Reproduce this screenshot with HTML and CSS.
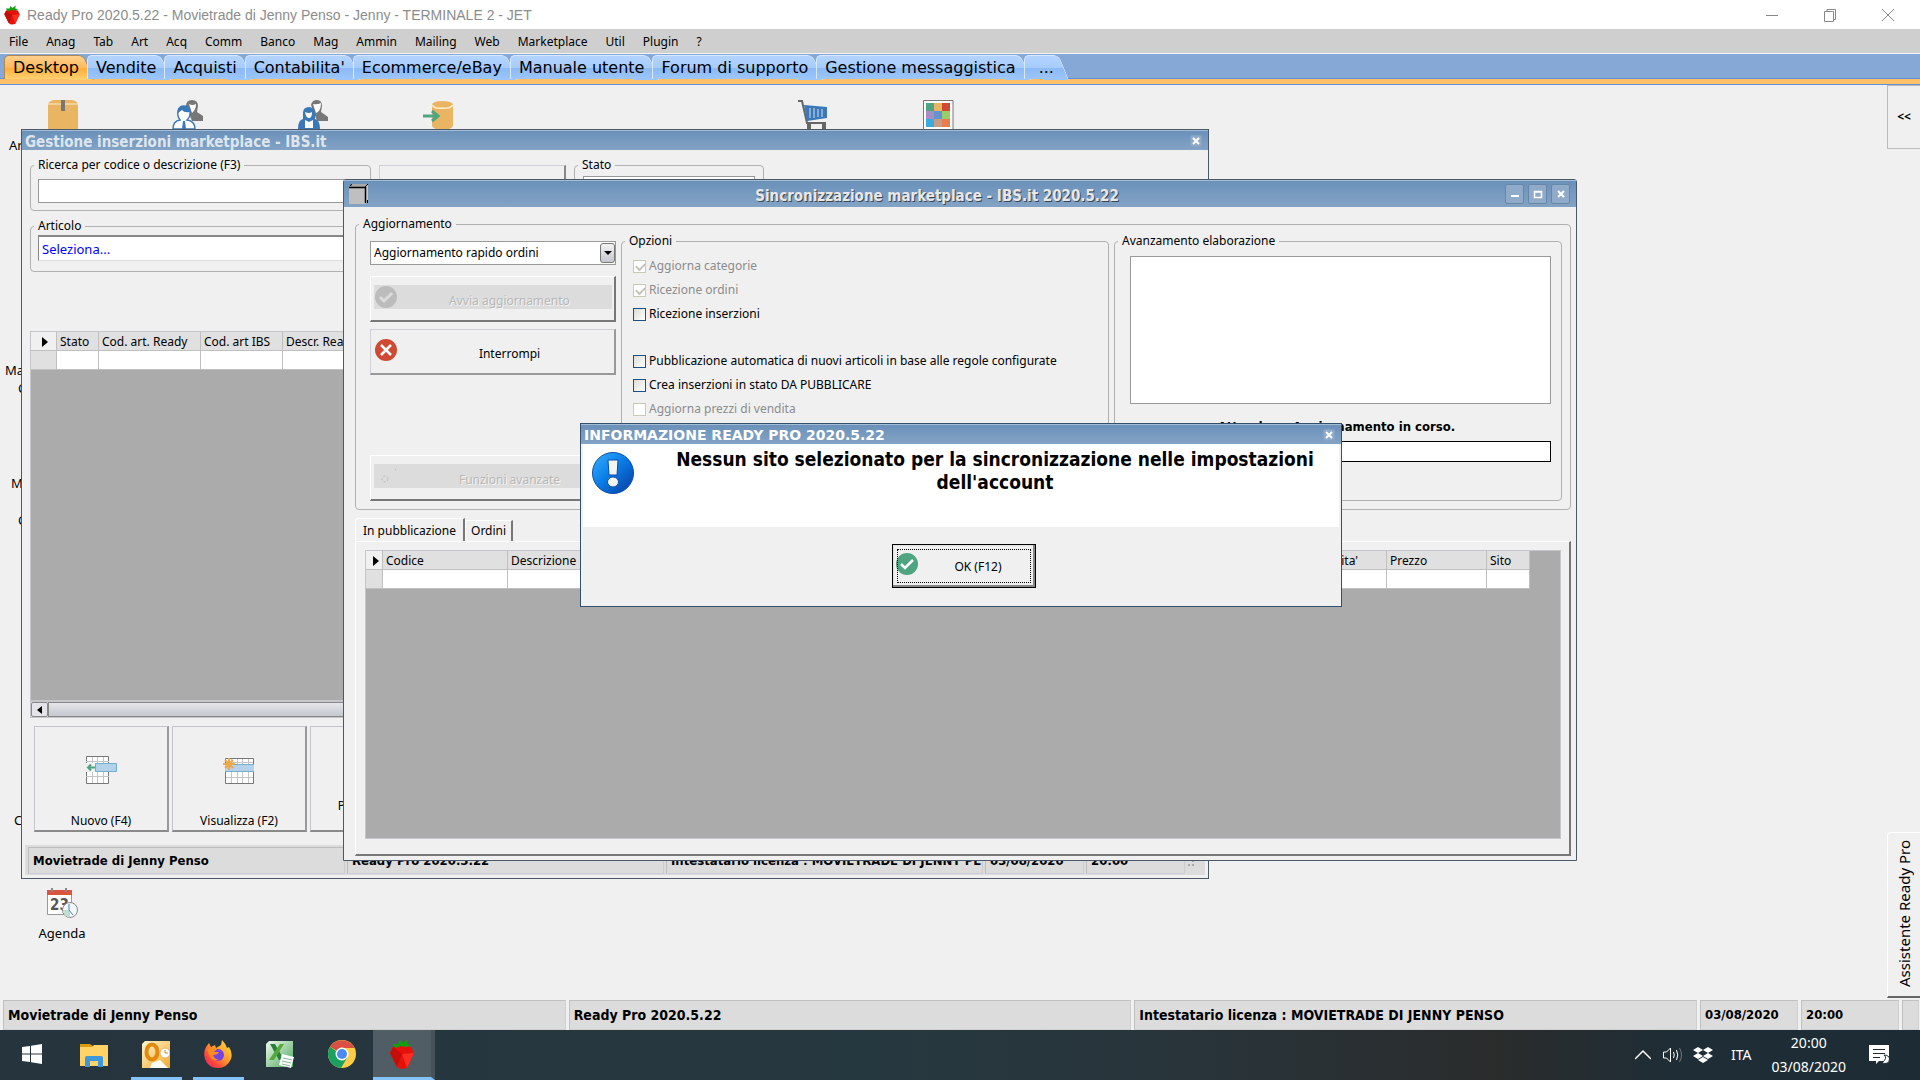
FILE: index.html
```html
<!DOCTYPE html>
<html lang="it">
<head>
<meta charset="utf-8">
<meta name="viewport" content="width=device-width, initial-scale=1">
<title>Ready Pro 2020.5.22</title>
<link rel="stylesheet" href="styles.css">
</head>
<body>
<svg class="defs" aria-hidden="true">
  <defs>
    <linearGradient id="blueBall" x1="0" y1="0" x2="1" y2="1"><stop offset="0" stop-color="#39b0ff"/><stop offset=".45" stop-color="#0a7fe8"/><stop offset="1" stop-color="#0838a0"/></linearGradient>
    <linearGradient id="fox" x1="1" y1="0" x2="0" y2="1"><stop offset="0" stop-color="#ffe94a"/><stop offset=".45" stop-color="#ff9a2a"/><stop offset=".75" stop-color="#ff4040"/><stop offset="1" stop-color="#e02070"/></linearGradient>
    <linearGradient id="mail" x1="0" y1="0" x2="1" y2="1"><stop offset="0" stop-color="#fff6cf"/><stop offset="1" stop-color="#f2a92c"/></linearGradient>
    <linearGradient id="sheet" x1="0" y1="0" x2="1" y2="1"><stop offset="0" stop-color="#f2faf0"/><stop offset="1" stop-color="#4aa85c"/></linearGradient>
    <symbol id="berry" viewBox="0 0 28 30">
      <path d="M5 8 L2 14 L9 28 L13 30 L19 29 L26 14 L23 8 L14 6Z" fill="#e5120c"/>
      <path d="M5 8 L14 15 L9 28 L2 14Z" fill="#c30f08"/><path d="M14 15 L26 14 L19 29Z" fill="#ff2d20"/>
      <path d="M4 5 L10 5 L12 1 L15 4 L20 0 L19 5 L24 6 L18 8 L13 7 L8 9Z" fill="#12a012"/>
    </symbol>
  </defs>
</svg>

<header class="titlebar">
  <svg class="titlebar-icon" viewBox="0 0 28 30"><use href="#berry"/></svg>
  <h1 class="titlebar-text">Ready Pro 2020.5.22 - Movietrade di Jenny Penso - Jenny - TERMINALE 2 - JET</h1>
  <div class="caption-buttons">
    <button class="caption-button" aria-label="Riduci a icona"><svg viewBox="0 0 14 14"><path d="M1 7.5H13"/></svg></button>
    <button class="caption-button" aria-label="Ripristina"><svg viewBox="0 0 14 14"><path d="M1.500 3.500H10.500V13.500H1.500Z M4 3V1.500H12.500V11.500H11"/></svg></button>
    <button class="caption-button" aria-label="Chiudi"><svg viewBox="0 0 14 14"><path d="M1 1L13 13M13 1L1 13"/></svg></button>
  </div>
</header>

<nav class="menubar">
  <button>File</button><button>Anag</button><button>Tab</button><button>Art</button><button>Acq</button><button>Comm</button><button>Banco</button><button>Mag</button><button>Ammin</button><button>Mailing</button><button>Web</button><button>Marketplace</button><button>Util</button><button>Plugin</button><button>?</button>
</nav>

<nav class="tabs">
  <button class="tab active">Desktop</button>
  <button class="tab">Vendite</button>
  <button class="tab">Acquisti</button>
  <button class="tab">Contabilita'</button>
  <button class="tab">Ecommerce/eBay</button>
  <button class="tab">Manuale utente</button>
  <button class="tab">Forum di supporto</button>
  <button class="tab">Gestione messaggistica</button>
  <button class="tab more">...</button>
</nav>

<main class="desktop">
  <div class="shortcuts">
    <svg viewBox="0 0 32 32"><path d="M1 5Q3 1 8 1H24Q29 1 31 5V32H1Z" fill="#e9b562"/><path d="M1 5H31" stroke="#fbeccb"/><path d="M14 1H18V12H14Z" fill="#777"/></svg>
    <svg viewBox="0 0 32 32"><path d="M14 7Q14 1 20 1Q26 1 26 7L25 13L31 17V22H20Z" fill="#777"/><path d="M17 5Q20 7 24 5Q24 11 20 14Z" fill="#fff"/><path d="M1 30Q1 22 8 21Q5 17 6 12Q7 7 12 7Q17 7 18 12Q19 17 15 21Q23 22 23 30Z" fill="#fff" stroke="#3a78b8" stroke-width="1.500"/><path d="M6 14V10Q8 7 12 7Q17 7 18 13Q12 14 10 11Z" fill="#3a78b8"/><path d="M11 22H13L14 30H10Z" fill="#3a78b8"/></svg>
    <svg viewBox="0 0 32 32"><path d="M14 6Q15 1 20 1Q25 1 25 7L24 13L31 18V22H20Z" fill="#777"/><path d="M16 5Q20 6 24 4Q24 12 19 14Z" fill="#fff"/><path d="M1 30Q1 21 6 20V14Q6 8 12 8Q17 8 18 14V20Q23 21 23 30Z" fill="#3a78b8"/><path d="M8 13Q12 15 15 13Q15 19 12 19Q9 19 8 13Z" fill="#fff"/><path d="M8 29V21L12 23L16 21V29Z" fill="#fff"/></svg>
    <svg viewBox="0 0 32 32"><path d="M10 5V27Q12 31 20 31Q29 31 31 27V5Q29 2 20 2Q12 2 10 5Z" fill="#e9b562"/><path d="M10 6Q13 10 20 9Q28 10 31 6" fill="none" stroke="#fbeccb" stroke-width="1.500"/><path d="M1 17H15M10 12L16 17L10 22" fill="none" stroke="#4fa582" stroke-width="3"/></svg>
    <svg class="shortcut-cart" viewBox="0 0 32 32"><path d="M1 2H5L10 24H29" fill="none" stroke="#666" stroke-width="2"/><path d="M7 6L30 8V19L10 22Z" fill="#3a78b8"/><path d="M13 9V19M17 9V19M21 10V18M25 10V18" stroke="#cfe0f2"/><path d="M10 24H14V32H10ZM25 24H29V32H25Z" fill="#666"/></svg>
    <svg viewBox="0 0 32 32"><path d="M1.500 1.500H31V32H1.500Z" fill="#fff" stroke="#777"/><path d="M4 4h8v8H4z" fill="#4fa582"/><path d="M12 4h8v8h-8z" fill="#e9b562"/><path d="M20 4h8v8h-8z" fill="#cf4a32"/><path d="M4 12h8v8H4z" fill="#a58fc4"/><path d="M12 12h8v8h-8z" fill="#6593d0"/><path d="M20 12h8v8h-8z" fill="#98ce68"/><path d="M4 20h8v8H4z" fill="#3cabdc"/><path d="M12 20h8v8h-8z" fill="#c69c84"/><path d="M20 20h8v8h-8z" fill="#ea7d50"/></svg>
  </div>
  <span class="label label-ar">Ar</span>
  <span class="label label-ma">Ma</span>
  <span class="label label-c1">C</span>
  <span class="label label-m">M</span>
  <span class="label label-c2">C</span>
  <span class="label label-c3">C</span>

  <a class="agenda" href="#">
    <svg viewBox="0 0 32 32"><path d="M1.500 3.500H25.500V26.500H1.500Z" fill="#fff" stroke="#999"/><path d="M1 2H26V7H1Z" fill="#d9553f"/><path d="M6 0V4M20 0V4" stroke="#888" stroke-width="2"/><text x="4" y="22" class="agenda-day">23</text><circle cx="24" cy="22" r="7.500" fill="#f4f8ff" stroke="#888"/><path d="M24 22V29.500A7.500 7.500 0 0 1 17 22Z" fill="#bfe0cc"/><path d="M23 16V22L27 27" stroke="#4a80b8" fill="none"/></svg>
    Agenda
  </a>

  <button class="side-toggle" aria-label="Apri pannello">&lt;&lt;</button>
  <button class="assistant"><span>Assistente Ready Pro</span></button>

  <section class="window listings">
    <header class="win-title">
      <h2>Gestione inserzioni marketplace - IBS.it</h2>
      <button class="win-close small" aria-label="Chiudi"><svg viewBox="0 0 10 10"><path d="M2 2L8 8M8 2L2 8"/></svg></button>
    </header>
    <div class="listings-body">
      <div class="filters">
        <fieldset class="group search-group">
          <legend><label for="search">Ricerca per codice o descrizione (F3)</label></legend>
          <input id="search" class="field" type="text">
        </fieldset>
        <div class="blank-panel"></div>
        <fieldset class="group state-group">
          <legend><label for="state">Stato</label></legend>
          <input id="state" class="field" type="text">
        </fieldset>
      </div>
      <fieldset class="group article-group">
        <legend><label for="article">Articolo</label></legend>
        <input id="article" class="field link-field" type="text" value="Seleziona...">
      </fieldset>
      <div class="grid-area listings-grid">
        <table class="grid">
          <colgroup><col class="c-mark"><col class="c-state"><col class="c-ready"><col class="c-ibs"><col class="c-desc"></colgroup>
          <thead><tr><th class="mark"><i class="pointer"></i></th><th>Stato</th><th>Cod. art. Ready</th><th>Cod. art IBS</th><th>Descr. Ready</th></tr></thead>
          <tbody><tr><th></th><td></td><td></td><td></td><td></td></tr></tbody>
        </table>
      </div>
      <div class="hscroll"><button aria-label="Scorri a sinistra"><i class="pointer-left"></i></button><div class="thumb"></div></div>
      <div class="actions">
        <button class="big-button">
          <svg viewBox="0 0 32 32"><path d="M1.500 3.500H23.500V30.500H1.500Z" fill="#fff" stroke="#777"/><path d="M1 8.500H24M1 23.500H24M7.500 4V30M12.500 4V30M18.500 4V30" stroke="#c4c4c4"/><path d="M0 10H12V19H0Z" fill="#f0f0f0"/><path d="M10.500 10.500H31.500V18.500H10.500Z" fill="#b4d2ea" stroke="#74add0"/><path d="M10 14.500H3M6 11.500L3 14.500L6 17.500" fill="none" stroke="#4fa582" stroke-width="2"/></svg>
          <span>Nuovo (F4)</span>
        </button>
        <button class="big-button">
          <svg viewBox="0 0 32 32"><path d="M2.500 5.500H30.500V30.500H2.500Z" fill="#fff" stroke="#777"/><path d="M3 9.500H30M3 24.500H30M8.500 6V30M14.500 6V30M19.500 6V30M25.500 6V30" stroke="#c4c4c4"/><path d="M2 11H31V19H2Z" fill="#b4d2ea"/><path d="M2 11.500H31M2 18.500H31" stroke="#74add0"/><path d="M6 5V17M0 11H12M2 7L10 15M10 7L2 15" stroke="#eba84c" stroke-width="2"/></svg>
          <span>Visualizza (F2)</span>
        </button>
        <button class="big-button"><span>Pubblicazione<br>automatica</span></button>
      </div>
      <footer class="win-status">
        <span>Movietrade di Jenny Penso</span><span>Ready Pro 2020.5.22</span><span>Intestatario licenza : MOVIETRADE DI JENNY PENSO</span><span class="short">03/08/2020</span><span class="short">20:00</span>
        <svg class="grip" viewBox="0 0 10 10"><path d="M5 1h2v2H5zM1 5h2v2H1zM5 5h2v2H5z"/></svg>
      </footer>
    </div>
  </section>

  <section class="window sync">
    <header class="win-title tall">
      <svg class="cube" viewBox="0 0 20 20"><path d="M0 3H16V20H0Z" fill="#bfbfbf"/><path d="M0 3L3 0H19L16 3Z" fill="#a8a8a8"/><path d="M16 3L19 0V17L16 20Z" fill="#c8c8c8"/><path d="M0 3.500H16.500V19" fill="none" stroke="#000" stroke-width="1.500"/><path d="M18.500 16V19M1 1.500L3 .5M16 3L19 0" stroke="#000"/></svg>
      <h2>Sincronizzazione marketplace - IBS.it 2020.5.22</h2>
      <button class="win-close" aria-label="Riduci"><svg viewBox="0 0 10 10"><path d="M1 7H9"/></svg></button>
      <button class="win-close" aria-label="Ingrandisci"><svg viewBox="0 0 10 10"><path d="M1.500 2.500H8.500V8.500H1.500Z M1 3H9" stroke-width="1.500"/></svg></button>
      <button class="win-close" aria-label="Chiudi"><svg viewBox="0 0 10 10"><path d="M2 2L8 8M8 2L2 8"/></svg></button>
    </header>
    <div class="sync-body">
      <fieldset class="group update-group">
        <legend>Aggiornamento</legend>
        <div class="update-columns">
          <div class="commands">
            <div class="combo">
              <select aria-label="Aggiornamento"><option>Aggiornamento rapido ordini</option></select>
              <i class="combo-arrow"></i>
            </div>
            <button class="command" disabled>
              <svg viewBox="0 0 22 22"><circle cx="11" cy="11" r="11" fill="#bcbcbc"/><path d="M5 11L9 15L17 7" fill="none" stroke="#dcdcdc" stroke-width="3"/></svg>
              <span>Avvia aggiornamento</span>
            </button>
            <button class="command">
              <svg viewBox="0 0 22 22"><circle cx="11" cy="11" r="11" fill="#cf4a32"/><path d="M6 6L16 16M16 6L6 16" fill="none" stroke="#fff" stroke-width="2.500"/></svg>
              <span>Interrompi</span>
            </button>
            <button class="command last" disabled>
              <svg viewBox="0 0 22 22"><circle cx="10" cy="14" r="3" fill="none" stroke="#bbb" stroke-dasharray="2 2"/><path d="M20 4L21 5" stroke="#bbb"/></svg>
              <span>Funzioni avanzate</span>
            </button>
          </div>
          <fieldset class="group options">
            <legend>Opzioni</legend>
            <label class="check off"><input type="checkbox" checked disabled>Aggiorna categorie</label>
            <label class="check off"><input type="checkbox" checked disabled>Ricezione ordini</label>
            <label class="check"><input type="checkbox">Ricezione inserzioni</label>
            <label class="check new-block"><input type="checkbox">Pubblicazione automatica di nuovi articoli in base alle regole configurate</label>
            <label class="check"><input type="checkbox">Crea inserzioni in stato DA PUBBLICARE</label>
            <label class="check off"><input type="checkbox" disabled>Aggiorna prezzi di vendita</label>
          </fieldset>
          <fieldset class="group progress-group">
            <legend><label for="log">Avanzamento elaborazione</label></legend>
            <textarea id="log"></textarea>
            <label class="wait" for="bar">Attendere. Aggiornamento in corso.</label>
            <progress id="bar" value="0" max="100"></progress>
          </fieldset>
        </div>
      </fieldset>
      <div class="page-tabs">
        <button class="page-tab current">In pubblicazione</button><button class="page-tab">Ordini</button>
      </div>
      <div class="page">
        <div class="grid-area">
          <table class="grid">
            <colgroup><col class="c-narrow"><col class="c-code"><col class="c-long"><col class="c-qty"><col class="c-price"><col class="c-site"></colgroup>
            <thead><tr><th class="mark"><i class="pointer"></i></th><th>Codice</th><th>Descrizione</th><th>Quantita'</th><th>Prezzo</th><th>Sito</th></tr></thead>
            <tbody><tr><th></th><td></td><td></td><td></td><td></td><td></td></tr></tbody>
          </table>
        </div>
      </div>
    </div>
  </section>

  <section class="window dialog" role="dialog" aria-labelledby="dialog-title">
    <header class="win-title">
      <h2 id="dialog-title">INFORMAZIONE READY PRO 2020.5.22</h2>
      <button class="win-close small" aria-label="Chiudi"><svg viewBox="0 0 10 10"><path d="M2 2L8 8M8 2L2 8"/></svg></button>
    </header>
    <div class="dialog-message">
      <svg viewBox="0 0 42 42"><circle cx="21" cy="21" r="20.500" fill="url(#blueBall)" stroke="#0a4fae"/><path d="M16 8H26L25 23H17Z" fill="#f4f4f4" stroke="#0a4fae"/><ellipse cx="21" cy="30" rx="5.500" ry="5" fill="#f4f4f4" stroke="#0a4fae"/></svg>
      <p>Nessun sito selezionato per la sincronizzazione nelle impostazioni dell'account</p>
    </div>
    <div class="dialog-buttons">
      <button class="ok">
        <svg viewBox="0 0 22 22"><circle cx="11" cy="11" r="11" fill="#4fa582"/><path d="M5 11L9 15L17 7" fill="none" stroke="#fff" stroke-width="2.500"/></svg>
        <span>OK (F12)</span>
      </button>
    </div>
  </section>
</main>

<footer class="statusbar">
  <span>Movietrade di Jenny Penso</span><span>Ready Pro 2020.5.22</span><span>Intestatario licenza : MOVIETRADE DI JENNY PENSO</span><span class="short">03/08/2020</span><span class="short">20:00</span><span class="end"></span>
</footer>

<footer class="taskbar">
  <button class="task" aria-label="Start"><svg class="start" viewBox="0 0 20 20"><path d="M0 3L8 2V9.500H0ZM9 1.800L20 0V9.500H9ZM0 10.500H8V18L0 17ZM9 10.500H20V20L9 18.200Z" fill="#fff"/></svg></button>
  <button class="task" aria-label="Esplora file"><svg viewBox="0 0 28 28"><path d="M0 4H10L13 6V10H0Z" fill="#dc9a08"/><path d="M0 7H12L14 5H28V26H0Z" fill="#ffd366"/><path d="M5 27V18Q5 16 7 16H21Q23 16 23 18V27H18V21H10V27Z" fill="#3f97dc"/></svg></button>
  <button class="task running" aria-label="Outlook"><svg viewBox="0 0 28 28"><path d="M3 1H28V28H0V4Z" fill="url(#mail)"/><ellipse cx="10" cy="12" rx="5.500" ry="7.500" fill="none" stroke="#e08a10" stroke-width="4"/><circle cx="23" cy="13" r="5" fill="#fff" stroke="#e8b060"/><path d="M23 10V13H26" fill="none" stroke="#d58a20"/><path d="M10 23L18 20L26 28H8Z" fill="#fffdf4"/></svg></button>
  <button class="task running" aria-label="Firefox"><svg viewBox="0 0 28 28"><path d="M2 7L5 3L7 7L11 5L12 8L17 5L18 0Q22 4 23 8L25 7Q29 13 27 19Q23 28 14 28Q4 28 1 19Q-1 12 2 7Z" fill="url(#fox)"/><circle cx="14" cy="15" r="6" fill="#7542e5"/><path d="M3 9Q8 6 13 9L10 12H15Q14 15 9 15Q10 19 15 20Q7 22 5 15Z" fill="#ff8a24"/></svg></button>
  <button class="task" aria-label="Excel"><svg viewBox="0 0 28 28"><path d="M3 1H27V27H0V4Z" fill="url(#sheet)"/><path d="M4 4H9L18 20H13Z" fill="#2a7f3c"/><path d="M14 4H18L8 20H3Z" fill="#56a83c"/><path d="M16 14L28 17L25 28L13 25Z" fill="#fff"/><path d="M17 18L26 20M16 21L25 23M16 24L24 26" stroke="#7fb58a"/></svg></button>
  <button class="task" aria-label="Chrome"><svg viewBox="0 0 28 28"><circle cx="14" cy="14" r="14" fill="#ffcd46"/><path d="M14 14L2 6.800A14 14 0 0 1 26.500 8H14Z" fill="#da4f43"/><path d="M14 14L8 11L2 6.800A14 14 0 0 0 13 28L19 18Z" fill="#1ba15f"/><circle cx="14" cy="14" r="6.500" fill="#fff"/><circle cx="14" cy="14" r="5" fill="#4c8bf5"/></svg></button>
  <button class="task running selected" aria-label="Ready Pro"><svg viewBox="0 0 28 30"><use href="#berry"/></svg></button>
  <div class="tray">
    <svg class="tray-caret" viewBox="0 0 16 16"><path d="M0 12L8 4L16 12" fill="none" stroke="#fff" stroke-width="1.500"/></svg>
    <svg class="tray-sound" viewBox="0 0 20 18"><path d="M1 6H4L8 2V16L4 12H1Z" fill="none" stroke="#fff"/><path d="M11 6Q12.500 9 11 12M14 4Q16.500 9 14 14" fill="none" stroke="#fff"/><path d="M17 2Q21 9 17 16" fill="none" stroke="#777"/></svg>
    <svg class="tray-box" viewBox="0 0 20 18"><path d="M5 1L10 4L5 7L0 4ZM15 1L20 4L15 7L10 4ZM5 7L10 10L5 13L0 10ZM15 7L20 10L15 13L10 10ZM10 11L15 14L10 17L5 14Z" fill="#fff"/></svg>
    <span>ITA</span>
    <time class="clock">20:00<br>03/08/2020</time>
    <svg class="tray-note" viewBox="0 0 22 20"><path d="M0 0H20V16H10L7 19V16H0Z" fill="#fff"/><path d="M4 4.500H16M4 8.500H16M4 12.500H11" stroke="#1d2c35"/><path d="M15 10Q19 13 13 18Q20 20 20.500 14Q20 10 15 10Z" fill="#fff" stroke="#1d2c35"/></svg>
  </div>
</footer>
</body>
</html>
```
FILE: styles.css
```css
* { box-sizing: border-box; }

:root {
  --face: #f0f0f0;
  --line: #b0b0b0;
  --frame: #4a5868;
  --ui: "Noto Sans", "DejaVu Sans Condensed", sans-serif;
  --bold: "DejaVu Sans Condensed", "Noto Sans", sans-serif;
}

body {
  margin: 0;
  min-height: 100vh;
  display: flex;
  flex-direction: column;
  overflow: hidden;
  background: var(--face);
  color: #000;
  font: 12px/16px var(--ui);
}

button, input, select, textarea { font: inherit; color: inherit; }
button { margin: 0; padding: 0; border: 0; background: none; }
h1, h2, p { margin: 0; }
.defs { position: absolute; width: 0; height: 0; }

/* Application title bar */
.titlebar { display: flex; align-items: center; height: 29px; padding-left: 3px; background: #fff; }
.titlebar-icon { width: 18px; height: 20px; margin-right: 6px; }
.titlebar-text { flex: 1; color: #8c8c8c; font: 14px/20px "Liberation Sans", Arial, sans-serif; }
.caption-buttons { display: flex; padding-right: 3px; }
.caption-button { width: 58px; height: 29px; display: grid; place-items: center; }
.caption-button svg { width: 14px; height: 14px; fill: none; stroke: #888; }

/* Menu bar */
.menubar { display: flex; gap: 18px; height: 25px; padding: 0 9px; background: #cfcfcf; border-bottom: 1px solid #f4f4f4; }
.menubar button { padding-top: 1px; line-height: 23px; }

/* Section tabs */
.tabs { display: flex; height: 31px; padding: 1px 0 0 4px; background: linear-gradient(#86a8d6 24px, #5f8fd4 24px 25px, #ffc06a 25px 30px, #5f8fd4 30px); isolation: isolate; }
.tab {
  position: relative;
  height: 24px;
  margin-right: 8px;
  padding: 0 0 0 8px;
  border: 1px solid #d8e9ff;
  border-width: 1px 0 0 1px;
  border-radius: 5px 0 0 0;
  background: linear-gradient(#b4d4ff, #a6ccfd 50%, #8cbaf6 52%, #9cc6fb);
  font: 16px/22px "DejaVu Sans", Verdana, sans-serif;
}
.tab::after {
  content: "";
  position: absolute;
  z-index: -1;
  top: -1px;
  right: -10px;
  width: 24px;
  height: 24px;
  border-top: 1px solid #d8e9ff;
  border-right: 1px solid #d8e9ff;
  border-radius: 0 6px 0 0;
  background: inherit;
  transform: skewX(22deg);
}
.tab.more { padding-left: 14px; }
.tab.active { border-color: #b08850; background: linear-gradient(#ffd08e, #ffb95e 50%, #ffae3c 52%, #ffd070); }
.tab.active::after { border-color: #b08850; }

/* Desktop */
.desktop { position: relative; flex: 1; min-height: 0; }
.shortcuts { display: grid; grid-template-columns: repeat(8, 125px); justify-items: center; padding-top: 14px; }
.shortcuts svg { width: 32px; height: 32px; }
.shortcut-cart { grid-column: 7; }
.label, .agenda { position: absolute; font-size: 13px; line-height: 18px; color: #000; }
.label-ar { left: 9px; top: 51px; }
.label-ma { left: 5px; top: 276px; }
.label-c1 { left: 18px; top: 294px; }
.label-m { left: 11px; top: 389px; }
.label-c2 { left: 18px; top: 426px; }
.label-c3 { left: 14px; top: 726px; }
.agenda { left: 22px; top: 803px; width: 80px; display: flex; flex-direction: column; align-items: center; gap: 4px; text-decoration: none; }
.agenda svg { width: 32px; height: 32px; }
.agenda-day { font: bold 15px "DejaVu Sans Condensed", sans-serif; fill: #555; }
.side-toggle { position: absolute; right: 0; top: 0; width: 33px; height: 64px; border: 1px solid #bbb; border-right: 0; font-weight: 700; }
.assistant { position: absolute; right: 0; bottom: 2px; width: 33px; height: 166px; border: 1px solid #fff; border-width: 1px 0 2px 1px; border-bottom-color: #666; border-radius: 4px 0 0 0; font-size: 15px; }
.assistant span { writing-mode: vertical-rl; transform: rotate(180deg); }

/* Windows */
.window { position: absolute; display: flex; flex-direction: column; border: 1px solid var(--frame); background: var(--face); }
.listings { left: 21px; top: 44px; width: 1188px; height: 750px; }
.sync { left: 343px; top: 94px; width: 1234px; height: 682px; border-radius: 3px 3px 0 0; }
.dialog { left: 580px; top: 338px; width: 762px; height: 184px; border-color: #35506c; }
.win-title { display: flex; align-items: center; gap: 4px; flex: none; height: 20px; padding: 0 6px 0 3px; border-top: 1px solid #a3bdd6; background: linear-gradient(#6b91ba, #83a3c5); }
.win-title h2 { flex: 1; padding-top: 3px; color: #dde6ee; font: bold 15px/20px var(--bold); }
.win-title.tall { height: 27px; padding: 0 6px 0 5px; }
.tall h2 { text-align: center; color: #e8e8e8; text-shadow: 1px 1px 0 #3c4650; }
.dialog .win-title h2 { padding-top: 1px; color: #fff; font: bold 14px/18px "DejaVu Sans", Verdana, sans-serif; }
.win-close { width: 19px; height: 20px; display: grid; place-items: center; border: 1px solid #6787a8; border-radius: 2px; background: #8fabc9; }
.win-close.small { width: 12px; height: 12px; border-color: #84a2c2; }
.win-close svg { width: 10px; height: 10px; fill: none; stroke: #fff; stroke-width: 2; }
.cube { width: 20px; height: 20px; }

/* Shared form parts */
.group { --inset: 7px; min-width: 0; margin: 0; padding: 0 var(--inset); border: 1px solid var(--line); border-radius: 4px; }
.group > legend { margin-left: calc(3px - var(--inset)); padding: 0 4px; line-height: 16px; }
.field { display: block; width: 100%; height: 24px; padding: 0 4px; border: 1px solid #999; background: #fff; outline: 0; }
.grid-area { flex: 1; border: 1px solid #c6c6ca; background: #ababab; overflow: hidden; }
.grid { border-collapse: separate; border-spacing: 0; table-layout: fixed; }
.grid th, .grid td { height: 19px; padding: 2px 0 0 3px; border: 1px solid #c0c0c0; border-width: 0 1px 1px 0; background: #fff; text-align: left; font-weight: 400; line-height: 16px; white-space: nowrap; }
.grid th { background: #e0e0e0; }
.grid thead .mark { background: #f0f0f0; text-align: right; padding: 0 8px 0 0; }
.pointer, .pointer-left { display: inline-block; border: 5px solid transparent; border-left: 6px solid #000; border-right: 0; vertical-align: middle; }
.pointer-left { border: 4px solid transparent; border-right: 5px solid #000; border-left: 0; }

/* Listings window */
.listings-body { flex: 1; display: flex; flex-direction: column; padding: 7px 3px 3px; }
.filters { display: flex; align-items: flex-start; gap: 8px; margin: 0 5px 7px; }
.search-group { width: 341px; height: 54px; padding-top: 6px; }
.state-group { --inset: 8px; width: 190px; height: 54px; padding-top: 3px; }
.blank-panel { width: 187px; height: 45px; margin-top: 8px; border: 1px solid #d0d0d8; border-right: 2px solid #888; }
.article-group { width: 734px; height: 54px; margin-left: 5px; padding-top: 1px; }
.link-field { height: 26px; padding: 0 3px; border-color: #888 #ddd #ddd #888; border-width: 2px 1px 1px; color: #00f; font-size: 13px; }
.listings-grid { margin: 59px 5px 0; }
.c-mark { width: 26px; } .c-state { width: 42px; } .c-ready { width: 102px; } .c-ibs { width: 82px; } .c-desc { width: 200px; }
.listings-grid .grid { width: 452px; }
.hscroll { display: flex; height: 17px; margin: 0 5px; border: 1px solid #c6c6ca; background: #ddd; }
.hscroll button { width: 17px; border: 1px solid #888; border-radius: 2px; background: #e4e4ea; line-height: 10px; }
.thumb { flex: 1; border: 1px solid #888; background: linear-gradient(#e6e6ea, #c6c8d0); }
.actions { display: flex; gap: 3px; margin: 8px 9px 13px; }
.big-button { width: 135px; height: 106px; display: flex; flex-direction: column; align-items: center; justify-content: flex-end; gap: 28px; padding-bottom: 2px; border: 1px solid #c4c4cc; border-width: 1px 2px 2px 1px; border-bottom-color: #8a8a8a; border-right-color: #999; line-height: 15px; }
.big-button svg { width: 32px; height: 32px; }
.win-status { display: flex; gap: 2px; height: 30px; padding: 2px 3px 1px; background: #dcdcdc; font: bold 13px/26px var(--bold); }
.win-status span { width: 317px; padding-left: 4px; border: 1px solid #bdbdbd; border-right-color: #ccc; border-bottom-color: #ccd; overflow: hidden; white-space: nowrap; }
.win-status .short { width: 99px; }
.grip { width: 10px; height: 10px; margin-top: 12px; fill: #aaa; }

/* Synchronisation window */
.sync-body { flex: 1; display: flex; flex-direction: column; padding: 9px 5px 4px 11px; }
.update-group { --inset: 14px; height: 294px; padding: 1px 8px 7px var(--inset); }
.update-columns { display: grid; grid-template-columns: 246px 488px 1fr; gap: 5px; height: 268px; }
.commands { display: flex; flex-direction: column; gap: 7px; padding-top: 8px; }
.combo { position: relative; margin-bottom: 4px; }
.combo select { appearance: none; display: block; width: 100%; height: 24px; padding: 0 20px 0 3px; border: 1px solid #999; border-radius: 0; background: #fff; }
.combo-arrow { position: absolute; right: 1px; top: 2px; width: 15px; height: 20px; border: 1px solid #777; border-radius: 3px; background: linear-gradient(#f4f4f6, #c4c6ce); pointer-events: none; }
.combo-arrow::after { content: ""; position: absolute; left: 3px; top: 7px; border: 4px solid transparent; border-top-color: #000; border-bottom: 0; }
.command { display: flex; align-items: center; height: 46px; padding: 0 4px; border: 1px solid #d0d0d6; border-width: 1px 2px 2px 1px; border-right-color: #999; border-bottom-color: #999; }
.command svg { width: 22px; height: 22px; margin-top: -3px; }
.command span { flex: 1; padding: 4px 0 0 12px; text-align: center; }
.command:disabled { border-color: #fff #777 #777 #fff; color: #b8b8b8; text-shadow: 1px 1px 0 #f4f4f4; background: linear-gradient(#dcdcdc, #dcdcdc) 3px 8px / 238px 24px no-repeat; }
.command.last { margin-top: auto; }
.options { --inset: 11px; padding-top: 5px; }
.check { display: flex; align-items: center; gap: 3px; height: 24px; white-space: nowrap; }
.check.new-block { margin-top: 23px; }
.check.off { color: #8c8c8c; }
.check input { appearance: none; width: 13px; height: 13px; margin: 0; border: 1px solid #1c5180; background: linear-gradient(135deg, #dcdcd7, #fff); }
.check input:disabled { border-color: #cac8bb; background: #fff; }
.check input:checked::after { content: ""; display: block; width: 7px; height: 4px; margin: 2px; border: 2px solid #c2c2b8; border-width: 0 0 2px 2px; transform: rotate(-45deg); }
.progress-group { --inset: 15px; padding: 7px 10px 0 var(--inset); }
.progress-group textarea { display: block; width: 100%; height: 148px; border: 1px solid #999; background: #fff; resize: none; }
.wait { display: block; margin: 15px 8px 6px 0; text-align: center; font: bold 13px/16px var(--bold); }
progress { appearance: none; display: block; width: 100%; height: 21px; border: 1px solid #000; background: #fff; }
progress::-webkit-progress-bar { background: #fff; }
.page-tabs { display: flex; align-items: flex-end; height: 24px; margin-top: 7px; }
.page-tab { height: 21px; padding: 0 5px; border: 1px solid #fff; border-bottom: 0; border-right: 2px solid #777; line-height: 20px; }
.page-tab.current { height: 24px; margin-bottom: -1px; padding: 0 7px; border-radius: 4px 0 0 0; background: var(--face); line-height: 22px; }
.page { flex: 1; display: flex; padding: 8px 8px 15px 9px; border: 1px solid #fff; border-width: 1px 2px 2px 1px; border-right-color: #777; border-bottom-color: #777; }
.c-narrow { width: 17px; } .c-code { width: 125px; } .c-long { width: 795px; } .c-qty { width: 84px; } .c-price { width: 100px; } .c-site { width: 43px; }
.page .grid { width: 1164px; }
.page .grid thead .mark { padding: 0 3px 0 0; }

/* Message dialog */
.dialog-message { display: flex; gap: 13px; height: 83px; margin: 0 2px; padding: 4px 0 0 9px; background: #fff; }
.dialog-message svg { flex: none; width: 42px; height: 42px; margin-top: 4px; }
.dialog-message p { flex: 1; padding: 0 22px 0 26px; text-align: center; font: bold 19px/23px var(--bold); }
.dialog-buttons { flex: 1; display: grid; place-content: start center; padding: 17px 0 0 5px; }
.ok { display: flex; align-items: center; width: 144px; height: 44px; border: 1px solid #000; box-shadow: inset -2px -2px #888, inset 1px 1px #ddd; outline: 1px dotted #000; outline-offset: -6px; padding: 0 14px 4px 3px; }
.ok svg { width: 22px; height: 22px; }
.ok span { flex: 1; padding: 6px 0 0 18px; text-align: center; }

/* Application status bar */
.statusbar { display: flex; gap: 3px; height: 30px; padding: 0 1px 0 3px; font: bold 14px/28px var(--bold); }
.statusbar span { flex: 1; padding-left: 4px; border: 1px solid #c0c0c0; border-right-color: #d0d0d0; border-bottom-color: #d0d0d0; background: #dcdcdc; white-space: nowrap; }
.statusbar .short { flex: 0 0 98px; font-size: 13px; }
.statusbar .end { flex: 0 0 17px; }

/* Windows taskbar */
.taskbar { display: flex; height: 50px; background: linear-gradient(90deg, #26343d, #26383f 45%, #28343a 62%, #2a2c2c 78%, #1f2d36 87%, #1d2c34); color: #fff; }
.task { width: 62px; display: grid; place-items: center; border-bottom: 3px solid transparent; background-clip: padding-box; }
.task:first-child { width: 63px; }
.task svg { width: 28px; height: 28px; }
.task .start { width: 20px; height: 20px; }
.task.running { background: linear-gradient(#85c3fb, #85c3fb) center bottom / 51px 3px no-repeat border-box; }
.task.selected { border-right: 4px solid #47525a; background: linear-gradient(#85c3fb, #85c3fb) center bottom / 100% 3px no-repeat border-box, #515d65; }
.task.selected svg { height: 30px; }
.tray { flex: 1; display: flex; align-items: center; justify-content: flex-end; padding-right: 29px; font-size: 14px; line-height: 24px; }
.tray span { margin: 0 20px 0 18px; }
.tray-caret { width: 16px; height: 16px; margin-right: 11px; }
.tray-sound { width: 21px; height: 18px; margin-right: 10px; }
.tray-box { width: 20px; height: 18px; }
.clock { text-align: center; margin-right: 23px; }
.tray-note { width: 22px; height: 20px; }
```
